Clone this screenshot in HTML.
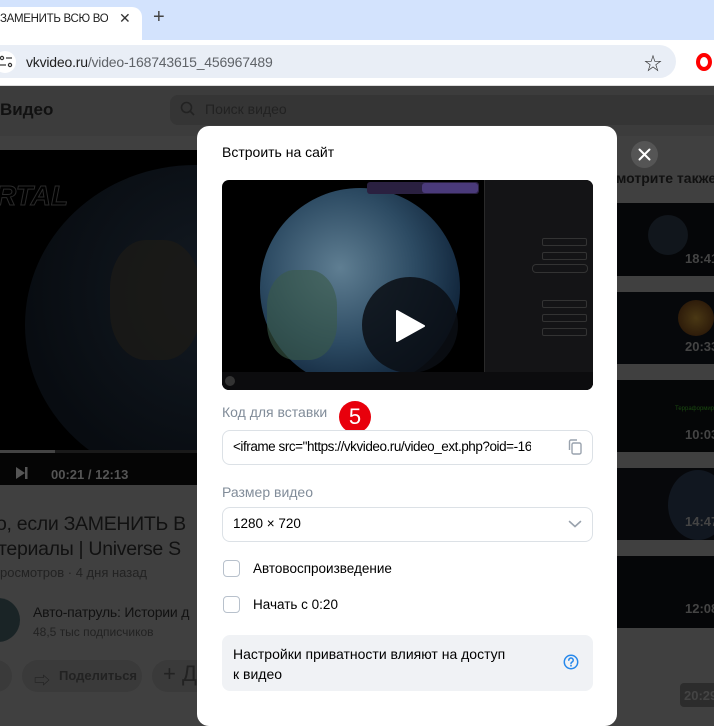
<!DOCTYPE html>
<html><head><meta charset="utf-8"><style>
*{box-sizing:border-box;margin:0;padding:0}
body{width:714px;height:710px;overflow:hidden;position:relative;font-family:"Liberation Sans","Noto Sans CJK SC",sans-serif;background:#404040}
.a{position:absolute}
.t{white-space:nowrap}
</style></head><body>
<!-- tab bar -->
<div class="a" style="left:0;top:0;width:714px;height:40px;background:#d3e3fd"></div>
<div class="a" style="left:0;top:7px;width:142px;height:33px;background:#fff;border-radius:0 10px 0 0"></div>
<div class="a t" style="left:0;top:13px;font-size:11.5px;color:#1f1f1f;width:108px;overflow:hidden;letter-spacing:-0.3px">ЗАМЕНИТЬ ВСЮ ВО,</div>
<div class="a t" style="left:119px;top:10px;font-size:14px;color:#333">✕</div>
<div class="a t" style="left:153px;top:6px;font-size:20px;color:#444">+</div>
<!-- address bar -->
<div class="a" style="left:0;top:40px;width:714px;height:46px;background:#fff;border-bottom:1px solid #ddd"></div>
<div class="a" style="left:-20px;top:45px;width:696px;height:33px;background:#e9eef6;border-radius:17px"></div>
<div class="a" style="left:-6px;top:51px;width:22px;height:22px;border-radius:11px;background:#fff"></div>
<svg class="a" style="left:0;top:55px" width="14" height="14"><circle cx="2" cy="3" r="1.6" fill="none" stroke="#333" stroke-width="1.2"/><line x1="6" y1="3" x2="12" y2="3" stroke="#333" stroke-width="1.2"/><line x1="0" y1="10" x2="6" y2="10" stroke="#333" stroke-width="1.2"/><circle cx="10" cy="10" r="1.6" fill="none" stroke="#333" stroke-width="1.2"/></svg>
<div class="a t" style="left:26px;top:54px;font-size:14px;color:#1f1f1f;letter-spacing:-0.2px">vkvideo.ru<span style="color:#5f6368">/video-168743615_456967489</span></div>
<div class="a t" style="left:644px;top:50px;font-size:18px;color:#333">☆</div>
<div class="a" style="left:696px;top:53px;width:16px;height:18px;border-radius:50%;border:4px solid #f00"></div>
<!-- header dark -->
<div class="a" style="left:0;top:86px;width:714px;height:50px;background:#3c3c3c"></div>
<div class="a t" style="left:0;top:100px;font-size:17px;font-weight:bold;color:#111">Видео</div>
<div class="a" style="left:170px;top:95px;width:560px;height:30px;background:#353535;border-radius:8px"></div>
<svg class="a" style="left:180px;top:101px" width="16" height="16"><circle cx="6.5" cy="6.5" r="5" fill="none" stroke="#222" stroke-width="1.6"/><line x1="10" y1="10" x2="14" y2="14" stroke="#222" stroke-width="1.6"/></svg>
<div class="a t" style="left:205px;top:101px;font-size:14px;color:#222">Поиск видео</div>
<!-- left video -->
<div class="a" style="left:0;top:150px;width:200px;height:335px;background:#000"></div>
<div class="a" style="left:25px;top:165px;width:340px;height:320px;border-radius:50%;background:radial-gradient(circle at 55% 40%,#131a22,#080c11 70%)"></div>
<div class="a" style="left:110px;top:240px;width:90px;height:120px;border-radius:40%;background:#1c1a16;opacity:.8"></div>
<div class="a t" style="left:-4px;top:180px;font-size:28px;font-style:italic;font-weight:bold;color:transparent;-webkit-text-stroke:1px #2a2a2a">RTAL</div>
<div class="a" style="left:0;top:450px;width:200px;height:3px;background:#1a1a1a"></div>
<div class="a" style="left:0;top:450px;width:55px;height:3px;background:#444"></div>
<div class="a" style="left:0;top:453px;width:200px;height:32px;background:#050505"></div>
<svg class="a" style="left:15px;top:466px" width="14" height="14"><path d="M1 1L10 7L1 13Z" fill="#555"/><rect x="10" y="1" width="2.5" height="12" fill="#555"/></svg>
<div class="a t" style="left:51px;top:467px;font-size:13px;font-weight:bold;color:#555">00:21 / 12:13</div>
<div class="a t" style="left:-4px;top:513px;font-size:19.5px;color:#111;letter-spacing:-0.3px">о, если ЗАМЕНИТЬ В</div>
<div class="a t" style="left:-2px;top:538px;font-size:19.5px;color:#111;letter-spacing:-0.3px">териалы | Universe S</div>
<div class="a t" style="left:0;top:565px;font-size:13px;color:#222">росмотров · 4 дня назад</div>
<div class="a" style="left:-24px;top:598px;width:44px;height:44px;border-radius:50%;background:#1a2426"></div>
<div class="a t" style="left:33px;top:604px;font-size:14px;color:#111;letter-spacing:-0.2px">Авто-патруль: Истории д</div>
<div class="a t" style="left:33px;top:625px;font-size:12px;color:#222">48,5 тыс подписчиков</div>
<div class="a" style="left:-20px;top:660px;width:32px;height:32px;border-radius:16px;background:#3a3a3a"></div>
<div class="a" style="left:22px;top:660px;width:120px;height:32px;border-radius:16px;background:#3a3a3a"></div>
<div class="a t" style="left:34px;top:667px;font-size:16px;color:#222">⇨</div>
<div class="a t" style="left:59px;top:668px;font-size:13px;font-weight:bold;color:#222">Поделиться</div>
<div class="a" style="left:152px;top:660px;width:60px;height:32px;border-radius:16px;background:#3a3a3a"></div>
<div class="a t" style="left:163px;top:661px;font-size:22px;color:#222">+ Д</div>
<!-- right column -->
<div class="a t" style="left:616px;top:170px;font-size:14px;font-weight:bold;color:#111">мотрите также</div>
<div class="a" style="left:616px;top:203px;width:98px;height:73px;background:#050608"></div>
<div class="a" style="left:648px;top:215px;width:40px;height:40px;border-radius:50%;background:#11161c"></div>
<div class="a t" style="left:685px;top:251px;font-size:13px;font-weight:bold;color:#444">18:41</div>
<div class="a" style="left:616px;top:292px;width:98px;height:72px;background:#06080b"></div>
<div class="a" style="left:678px;top:300px;width:36px;height:36px;border-radius:50%;background:radial-gradient(#4a3814,#221006)"></div>
<div class="a t" style="left:685px;top:339px;font-size:13px;font-weight:bold;color:#444">20:33</div>
<div class="a" style="left:616px;top:380px;width:98px;height:72px;background:#050607"></div>
<div class="a t" style="left:675px;top:406px;font-size:6px;color:#1a4a10">Терраформир</div>
<div class="a t" style="left:685px;top:427px;font-size:13px;font-weight:bold;color:#444">10:03</div>
<div class="a" style="left:616px;top:468px;width:98px;height:72px;background:#07080b"></div>
<div class="a" style="left:668px;top:470px;width:60px;height:70px;border-radius:50%;background:#111720"></div>
<div class="a t" style="left:685px;top:514px;font-size:13px;font-weight:bold;color:#444">14:47</div>
<div class="a" style="left:616px;top:556px;width:98px;height:72px;background:#050608"></div>
<div class="a t" style="left:685px;top:601px;font-size:13px;font-weight:bold;color:#444">12:08</div>
<div class="a" style="left:680px;top:683px;width:40px;height:24px;background:#2c2c2c;border-radius:4px"></div>
<div class="a t" style="left:684px;top:688px;font-size:13px;font-weight:bold;color:#444">20:29</div>
<!-- close -->
<div class="a" style="left:631px;top:141px;width:27px;height:27px;border-radius:50%;background:#555"></div>
<svg class="a" style="left:631px;top:141px" width="27" height="27"><path d="M8.5 8.5L18.5 18.5M18.5 8.5L8.5 18.5" stroke="#fff" stroke-width="2" stroke-linecap="round"/></svg>
<!-- modal -->
<div class="a" style="left:197px;top:126px;width:420px;height:600px;background:#fff;border-radius:12px"></div>
<div class="a t" style="left:222px;top:144px;font-size:14px;color:#000">Встроить на сайт</div>
<div class="a" style="left:222px;top:180px;width:371px;height:210px;background:#000;border-radius:7px;overflow:hidden">
  <div class="a" style="left:38px;top:8px;width:200px;height:200px;border-radius:50%;background:radial-gradient(circle at 40% 40%,#5f7e92,#2c4a62 45%,#10243a 75%)"></div>
  <div class="a" style="left:45px;top:90px;width:70px;height:90px;border-radius:40%;background:#3a5a48;opacity:.6"></div>
  <div class="a" style="left:140px;top:97px;width:96px;height:96px;border-radius:50%;background:rgba(10,14,20,.85)"></div>
  <svg class="a" style="left:172px;top:130px" width="32" height="32"><path d="M3 1L30 16L3 31Z" fill="#fff" stroke="#fff" stroke-width="2" stroke-linejoin="round"/></svg>
  <div class="a" style="left:262px;top:0;width:109px;height:210px;background:#141416;border-left:1px solid #2a2a2a"></div>
  <div class="a" style="left:145px;top:2px;width:112px;height:12px;background:#2a2040;border-radius:3px"></div>
  <div class="a" style="left:200px;top:3px;width:56px;height:10px;background:#4a3a7a;border-radius:3px"></div>
  <div class="a" style="left:320px;top:58px;width:45px;height:8px;border:1px solid #333;border-radius:2px"></div>
  <div class="a" style="left:320px;top:72px;width:45px;height:8px;border:1px solid #333;border-radius:2px"></div>
  <div class="a" style="left:310px;top:84px;width:56px;height:9px;border:1px solid #333;border-radius:4px"></div>
  <div class="a" style="left:320px;top:120px;width:45px;height:8px;border:1px solid #333;border-radius:2px"></div>
  <div class="a" style="left:320px;top:134px;width:45px;height:8px;border:1px solid #333;border-radius:2px"></div>
  <div class="a" style="left:320px;top:148px;width:45px;height:8px;border:1px solid #333;border-radius:2px"></div>
  <div class="a" style="left:0;top:192px;width:371px;height:18px;background:#0c0c0e"></div>
  <div class="a" style="left:3px;top:196px;width:10px;height:10px;border-radius:50%;background:#333"></div>
</div>
<div class="a t" style="left:222px;top:404px;font-size:14px;color:#818c99">Код для вставки</div>
<div class="a" style="left:339px;top:401px;width:32px;height:32px;border-radius:50%;background:#e8000c;color:#fff;font-size:22px;text-align:center;line-height:32px">5</div>
<div class="a" style="left:222px;top:430px;width:371px;height:35px;border:1px solid #dce1e6;border-radius:8px;background:#fff"></div>
<div class="a t" style="left:233px;top:439px;font-size:13.5px;color:#000;width:298px;overflow:hidden;letter-spacing:-0.45px">&lt;iframe src="https://vkvideo.ru/video_ext.php?oid=-1687</div>
<svg class="a" style="left:568px;top:439px" width="14" height="16"><rect x="4" y="4" width="9" height="11" rx="1.5" fill="none" stroke="#99a2ad" stroke-width="1.4"/><path d="M1.5 11V2.5A1.5 1.5 0 0 1 3 1H9" fill="none" stroke="#99a2ad" stroke-width="1.4"/></svg>
<div class="a t" style="left:222px;top:484px;font-size:14px;color:#818c99">Размер видео</div>
<div class="a" style="left:222px;top:507px;width:371px;height:35px;border:1px solid #dce1e6;border-radius:8px;background:#fff"></div>
<div class="a t" style="left:233px;top:516px;font-size:13.5px;color:#000">1280 × 720</div>
<svg class="a" style="left:568px;top:519px" width="14" height="10"><path d="M1.5 2.5L7 7.5L12.5 2.5" fill="none" stroke="#99a2ad" stroke-width="1.6" stroke-linecap="round"/></svg>
<div class="a" style="left:223px;top:560px;width:17px;height:17px;border:1.5px solid #b8c1cc;border-radius:4px"></div>
<div class="a t" style="left:253px;top:561px;font-size:13.5px;color:#000">Автовоспроизведение</div>
<div class="a" style="left:223px;top:596px;width:17px;height:17px;border:1.5px solid #b8c1cc;border-radius:4px"></div>
<div class="a t" style="left:253px;top:597px;font-size:13.5px;color:#000">Начать с 0:20</div>
<div class="a" style="left:222px;top:635px;width:371px;height:56px;background:#f0f2f5;border-radius:8px"></div>
<div class="a t" style="left:233px;top:644px;font-size:14px;color:#000;line-height:20px">Настройки приватности влияют на доступ<br>к видео</div>
<svg class="a" style="left:563px;top:654px" width="16" height="16"><circle cx="8" cy="8" r="6.7" fill="none" stroke="#2688eb" stroke-width="1.5"/><path d="M5.8 6.2A2.2 2.2 0 1 1 8.8 8.2C8.2 8.5 8 8.9 8 9.6" fill="none" stroke="#2688eb" stroke-width="1.5" stroke-linecap="round"/><circle cx="8" cy="11.8" r="0.9" fill="#2688eb"/></svg>
</body></html>
